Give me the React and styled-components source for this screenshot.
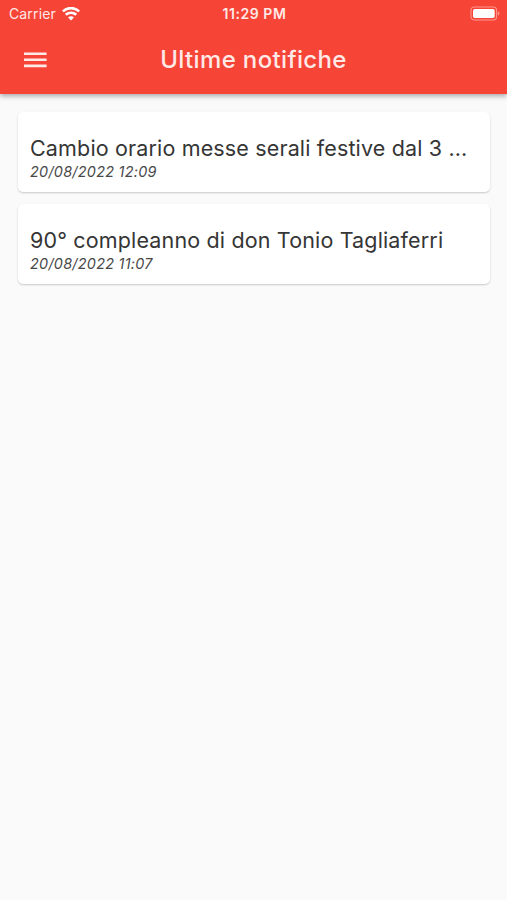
import React from "react";
import styled, { createGlobalStyle } from "styled-components";

const GlobalStyle = createGlobalStyle`
  * { box-sizing: border-box; }
  body {
    margin: 0;
    background: #fafafa;
    font-family: Inter, "Liberation Sans", sans-serif;
  }
`;

const Screen = styled.div`
  min-height: 900px;
  display: flex;
  flex-direction: column;
  background: #fafafa;
`;

const Header = styled.header`
  height: 94px;
  background: #f64437;
  color: #ffe9e6;
  box-shadow: 0 2px 5px rgba(0, 0, 0, 0.34);
`;

const StatusBar = styled.div`
  height: 27px;
  display: grid;
  grid-template-columns: 1fr auto 1fr;
  align-items: center;
  padding: 0 7px 0 9px;
`;

const Network = styled.div`
  display: flex;
  align-items: center;
  gap: 6px;
`;

const Carrier = styled.span`
  font-size: 14px;
  line-height: 27px;
  letter-spacing: 0.14px;
`;

const Clock = styled.time`
  padding-top: 1px;
  font-size: 14px;
  line-height: 26px;
  font-weight: 600;
  letter-spacing: 0.55px;
`;

const Battery = styled.svg`
  justify-self: end;
`;

const Toolbar = styled.div`
  height: 67px;
  display: grid;
  grid-template-columns: 47px 1fr 47px;
  align-items: center;
  padding: 0 0 1px;
`;

const MenuButton = styled.button`
  display: flex;
  justify-content: flex-end;
  padding: 0;
  border: 0;
  background: none;
  color: inherit;
`;

const Title = styled.h1`
  margin: 0;
  text-align: center;
  font-size: 24px;
  line-height: 30px;
  font-weight: 550;
  letter-spacing: 0.35px;
`;

const List = styled.main`
  display: flex;
  flex-direction: column;
  gap: 12px;
  padding: 18px 17px 0 18px;
`;

const Card = styled.article`
  height: 80px;
  padding: 22px 12px 0;
  border-radius: 5px;
  background: #fff;
  box-shadow: 0 1px 2px rgba(0, 0, 0, 0.2);
`;

const Subject = styled.h2`
  margin: 0;
  color: #353535;
  font-size: 21.5px;
  line-height: 28px;
  font-weight: 400;
  letter-spacing: 0.15px;
  white-space: nowrap;
`;

const DateLine = styled.time`
  display: block;
  margin-top: 1px;
  color: #484848;
  font-size: 14.4px;
  line-height: 18px;
  font-style: italic;
  letter-spacing: 0.27px;
`;

const notifications = [
  { subject: "Cambio orario messe serali festive dal 3 ...", date: "20/08/2022 12:09" },
  { subject: "90° compleanno di don Tonio Tagliaferri", date: "20/08/2022 11:07" },
];

export default function App() {
  return (
    <Screen>
      <GlobalStyle />
      <Header>
        <StatusBar>
          <Network>
            <Carrier>Carrier</Carrier>
            <svg width="18" height="14" viewBox="0 0 18 14" fill="none" stroke="#fff" strokeWidth="2.6">
              <path d="M0.9 4.4C5.4 0 12.6 0 17.1 4.4" />
              <path d="M3.8 7.8C6.6 5.1 11.4 5.1 14.2 7.8" />
              <path d="M6.1 10.5C7.6 8.9 10.4 8.9 11.9 10.5L9 13.4Z" fill="#fff" stroke="none" />
            </svg>
          </Network>
          <Clock>11:29 PM</Clock>
          <Battery width="30" height="15" viewBox="0 0 30 15">
            <rect x="1" y="1" width="25.6" height="13" rx="3.4" fill="none" stroke="#ff978f" strokeWidth="1.1" />
            <rect x="3" y="3" width="21.7" height="9" rx="1.8" fill="#fff" />
            <path d="M27.9 5.3C30 6.1 30 8.9 27.9 9.7Z" fill="#ff978f" />
          </Battery>
        </StatusBar>
        <Toolbar>
          <MenuButton aria-label="Menu">
            <svg width="23" height="16" viewBox="0 0 23 16" fill="currentColor">
              <path d="M0 .4h22.6v2.6H0zM0 6.5h22.6v2.6H0zM0 12.6h22.6v2.6H0z" />
            </svg>
          </MenuButton>
          <Title>Ultime notifiche</Title>
        </Toolbar>
      </Header>
      <List>
        {notifications.map((item) => (
          <Card key={item.date}>
            <Subject>{item.subject}</Subject>
            <DateLine>{item.date}</DateLine>
          </Card>
        ))}
      </List>
    </Screen>
  );
}
